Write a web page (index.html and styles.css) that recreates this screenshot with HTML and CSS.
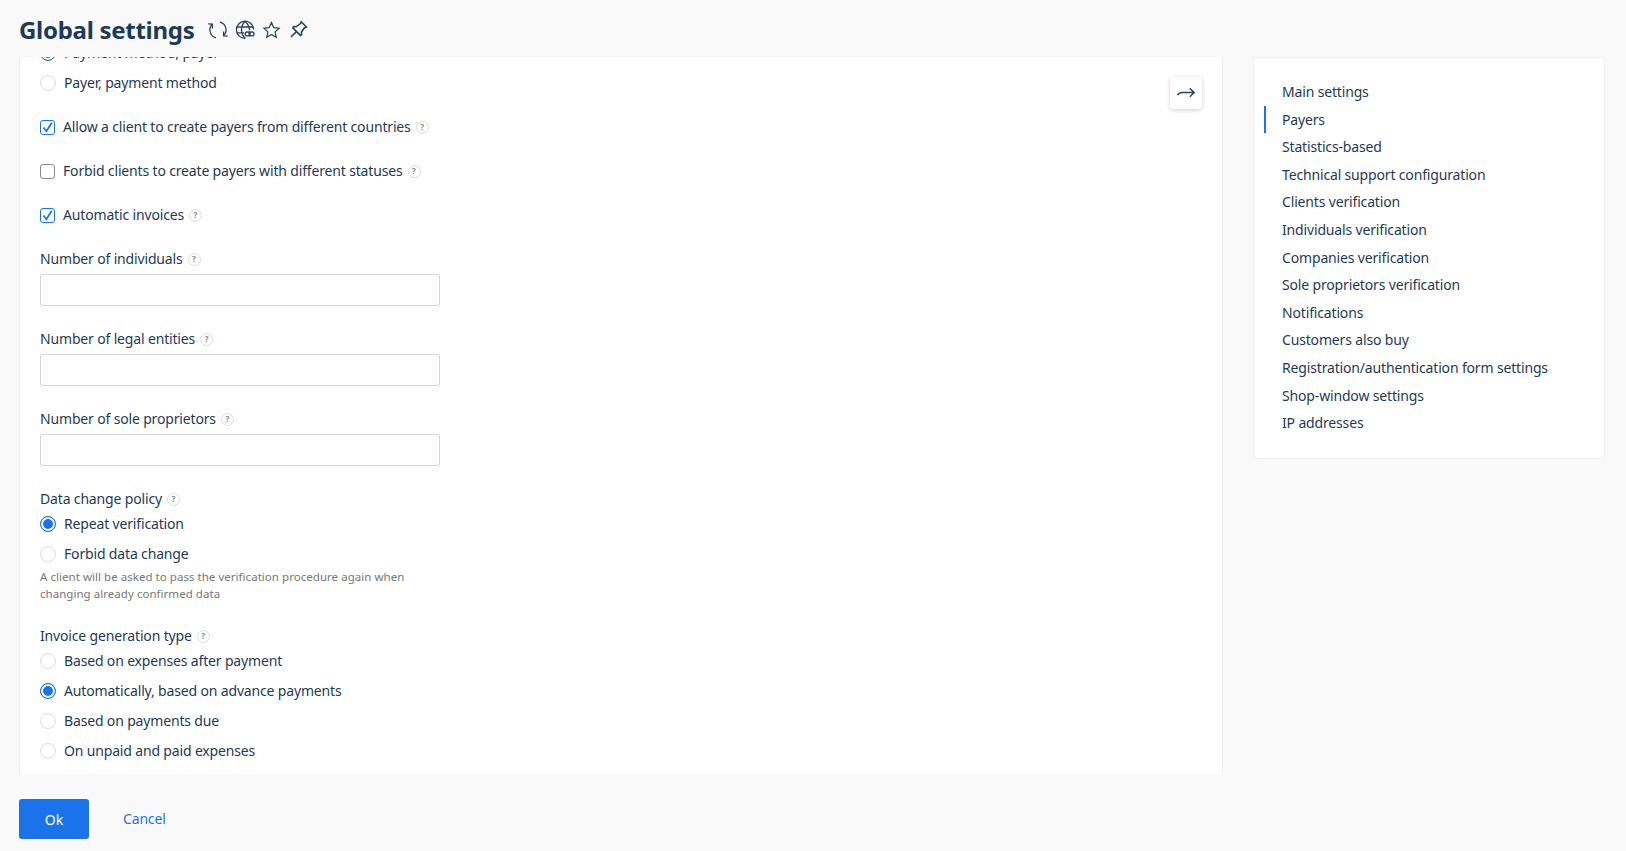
FILE: index.html
```html
<!DOCTYPE html>
<html lang="en">
<head>
<meta charset="utf-8">
<title>Global settings</title>
<link rel="stylesheet" href="styles.css">
</head>
<body>
<div class="page">
  <header class="header">
    <h1 class="title">Global settings</h1>
    <div class="title-icons">
      <svg class="ico ico-refresh" viewBox="0 0 20 20"><path d="M12 2.2A8 8 0 0 1 15.6 15.7M8 17.8A8 8 0 0 1 4.4 4.3"/><path d="M15.6 11.4V15.9L19.8 16.2M4.4 8.6V4.1L.2 3.8"/></svg>
      <svg class="ico ico-globe" viewBox="0 0 20 20"><path d="M10.4 18.4A8.6 8.6 0 1 1 18.6 9.6"/><path d="M1.8 7H18M1.8 12.8H9M10 1.2C5.4 6 5.4 13.6 10 18.2M10 1.2C13 4 14.4 7 14.6 10.4"/><rect x="10.2" y="12" width="5" height="3.8" rx="1.9"/><rect x="14" y="12" width="5" height="3.8" rx="1.9"/></svg>
      <svg class="ico ico-star" viewBox="0 0 20 20"><path d="M10 2.2 12.4 7.5 18 8.1 13.8 12 15 17.6 10 14.8 5 17.6 6.2 12 2 8.1 7.6 7.5Z"/></svg>
      <svg class="ico ico-pin" viewBox="0 0 20 20"><path d="M13.2 1.8 18.4 7 16.4 8 13.4 12 13.6 14.6 12.4 15.4 4.8 7.8 5.6 6.6 8 6.8 12.2 3.8Z"/><path d="M8.4 11.6 3 17"/></svg>
    </div>
  </header>
  <main class="main">
    <section class="panel">
      <button class="collapse" type="button" aria-label="Collapse">
        <svg viewBox="0 0 20 20"><path d="M1.6 12.2C2.6 10.2 4.4 9.6 6.4 9.6H18.2M13.8 5.4 18.2 9.6 13.8 13.8"/></svg>
      </button>
      <form class="form">
        <div class="radios first">
          <label class="radio on"><i></i>Payment method, payer</label>
          <label class="radio"><i></i>Payer, payment method</label>
        </div>
        <label class="check on"><i><svg viewBox="0 0 14 14"><path d="M2.6 7 5.8 11 11.6 1.8"/></svg></i>Allow a client to create payers from different countries<span class="help">?</span></label>
        <label class="check"><i></i>Forbid clients to create payers with different statuses<span class="help">?</span></label>
        <label class="check on"><i><svg viewBox="0 0 14 14"><path d="M2.6 7 5.8 11 11.6 1.8"/></svg></i>Automatic invoices<span class="help">?</span></label>
        <div class="field first-field">
          <div class="label">Number of individuals<span class="help">?</span></div>
          <input class="input" type="text">
        </div>
        <div class="field">
          <div class="label">Number of legal entities<span class="help">?</span></div>
          <input class="input" type="text">
        </div>
        <div class="field">
          <div class="label">Number of sole proprietors<span class="help">?</span></div>
          <input class="input" type="text">
        </div>
        <div class="field">
          <div class="label">Data change policy<span class="help">?</span></div>
          <div class="radios">
            <label class="radio on"><i></i>Repeat verification</label>
            <label class="radio"><i></i>Forbid data change</label>
          </div>
          <p class="hint">A client will be asked to pass the verification procedure again when changing already confirmed data</p>
        </div>
        <div class="field invoice">
          <div class="label">Invoice generation type<span class="help">?</span></div>
          <div class="radios">
            <label class="radio"><i></i>Based on expenses after payment</label>
            <label class="radio on"><i></i>Automatically, based on advance payments</label>
            <label class="radio"><i></i>Based on payments due</label>
            <label class="radio"><i></i>On unpaid and paid expenses</label>
          </div>
        </div>
      </form>
    </section>
    <nav class="side">
      <a>Main settings</a>
      <a class="active">Payers</a>
      <a>Statistics-based</a>
      <a>Technical support configuration</a>
      <a>Clients verification</a>
      <a>Individuals verification</a>
      <a>Companies verification</a>
      <a>Sole proprietors verification</a>
      <a>Notifications</a>
      <a>Customers also buy</a>
      <a>Registration/authentication form settings</a>
      <a>Shop-window settings</a>
      <a>IP addresses</a>
    </nav>
  </main>
  <footer class="footer">
    <button class="ok" type="button">Ok</button>
    <a class="cancel">Cancel</a>
  </footer>
</div>
</body>
</html>
```
FILE: styles.css
```css
* { box-sizing: border-box; }
html, body { margin: 0; height: 100%; overflow: hidden; }
body {
  background: #f9f9f9;
  color: #1f3a56;
  font-family: "Noto Sans", "Open Sans", sans-serif;
  font-size: 14px;
  letter-spacing: -.16px;
}
.page { height: 851px; display: flex; flex-direction: column; }
.header { height: 57px; flex: none; display: flex; align-items: center; padding: 2px 0 0 19px; }
.title { margin: 0; font-size: 24px; font-weight: 700; line-height: 32px; letter-spacing: -.28px; color: #1f3a56; }
.title-icons { display: flex; align-items: center; margin-left: 14px; gap: 7px; }
.ico { width: 20px; height: 20px; fill: none; stroke: #2b4257; stroke-width: 1.3; }
.ico-star { width: 19px; }
.ico-pin { stroke-width: 1.6; }
.main { flex: none; height: 717px; display: flex; align-items: flex-start; padding: 0 22px 0 19px; }
.panel {
  position: relative;
  width: 1204px;
  height: 717px;
  flex: none;
  overflow: hidden;
  background: #fff;
  border: 1px solid #eee;
  border-width: 0 1px;
}
.collapse {
  position: absolute;
  top: 20px;
  left: 1150px;
  width: 32px;
  height: 32px;
  padding: 6px;
  border: 0;
  border-radius: 3px;
  background: #fff;
  box-shadow: 0 1px 4px rgba(0, 0, 0, .2);
}
.collapse svg { display: block; width: 20px; height: 20px; fill: none; stroke: #33475b; stroke-width: 1.5; }
.form { padding-left: 20px; margin-top: -12px; width: 430px; }
.radios { display: flex; flex-direction: column; gap: 14px; }
.radio { display: flex; align-items: center; height: 16px; gap: 8px; line-height: 16px; white-space: nowrap; }
.radio i { width: 16px; height: 16px; flex: none; border: 1px solid #ddd; border-radius: 50%; background: #fff; }
.radio.on i { border: 1.5px solid #1a73e8; box-shadow: inset 0 0 0 2px #fff; background: #1a73e8; }
.check { display: flex; align-items: center; height: 16px; line-height: 16px; margin-top: 28px; white-space: nowrap; }
.check i { width: 15px; height: 15px; flex: none; margin-right: 8px; border: 1px solid #8a8a8a; border-radius: 3px; background: #fff; }
.check.on i { border-color: #1a73e8; }
.check i svg { display: block; width: 13px; height: 13px; fill: none; stroke: #1a73e8; stroke-width: 1.9; }
.help {
  display: inline-flex;
  align-items: center;
  justify-content: center;
  width: 13px;
  height: 13px;
  margin-left: 5px;
  flex: none;
  border: 1.5px solid #ddd;
  border-radius: 50%;
  color: #888;
  font-size: 8px;
  line-height: 1;
  font-weight: 700;
  letter-spacing: 0;
}
.field { margin-top: 25px; }
.first-field { margin-top: 28px; }
.label { display: flex; align-items: center; height: 16px; line-height: 16px; }
.input { display: block; width: 400px; height: 32px; margin-top: 7px; border: 1px solid #d4d4d4; border-radius: 2px; background: #fff; }
.label + .radios { margin-top: 9px; }
.hint { margin: 6px 0 0; width: 390px; font-size: 11.5px; line-height: 17px; letter-spacing: .04px; color: #777; }
.invoice { margin-top: 26px; }
.side {
  width: 352px;
  height: 402px;
  margin-left: 30px;
  padding: 20px 0 0 10px;
  display: flex;
  flex-direction: column;
  flex: none;
  background: #fff;
  border: 1px solid #eee;
  border-radius: 4px;
}
.side a {
  display: block;
  height: 27.6px;
  line-height: 27.6px;
  padding-left: 16px;
  border-left: 2px solid transparent;
  color: #1f3a56;
  white-space: nowrap;
}
.side a.active { border-left-color: #1a73e8; }
.footer { flex: 1; display: flex; align-items: flex-start; padding: 25px 0 0 19px; }
.ok {
  width: 70px;
  height: 40px;
  border: 0;
  border-radius: 3px;
  background: #1a73e8;
  color: #fff;
  font: inherit;
  font-size: 14px;
}
.cancel { margin-left: 34px; line-height: 40px; color: #1a73e8; }
```
